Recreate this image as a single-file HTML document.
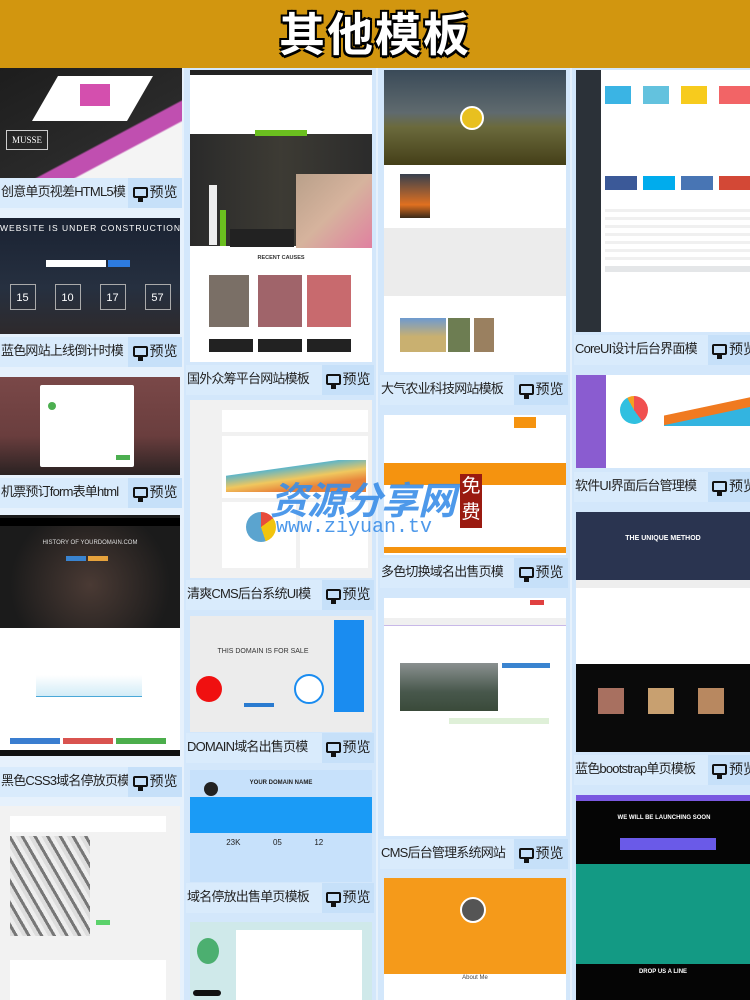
<!DOCTYPE html>
<html><head><meta charset="utf-8"><style>
*{margin:0;padding:0;box-sizing:border-box}
body{width:750px;height:1000px;overflow:hidden;background:#e6f1fc;position:relative;font-family:"Liberation Sans","Noto Sans CJK SC",sans-serif}
.a{position:absolute}
.hd{left:0;top:0;width:750px;height:68px;background:#d2960f;text-align:center}
.hd span{font-size:46px;font-weight:bold;color:#fff;line-height:70px;letter-spacing:2px;text-shadow:2px 2px 0 #000,-2px -2px 0 #000,2px -2px 0 #000,-2px 2px 0 #000,0 3px 0 #000}
.col{background:#d3e7fb}
.lb{background:#d9ebfc;font-size:13px;color:#222;line-height:28px;white-space:nowrap;overflow:hidden;padding-left:1px;letter-spacing:-0.8px}
.bt{background:#c6e0f9;font-size:14px;color:#222;line-height:28px;text-align:center;white-space:nowrap}
.mon{display:inline-block;width:15px;height:11px;border:2.5px solid #111;border-radius:2px;vertical-align:-1px;position:relative;margin-right:2px}
.mon:after{content:"";position:absolute;left:3px;top:9px;width:5px;height:4px;background:#111}
.w{background:#fff}
</style></head><body>
<div class="a hd"><span>其他模板</span></div>

<!-- column 1 -->
<div class="a" style="left:0;top:68px;width:182px;height:110px;background:linear-gradient(152deg,#1d1d1d 0%,#2a2a2a 62%,#c04fb0 63%,#c04fb0 72%,#f4f4f4 73%)"></div>
<div class="a" style="left:45px;top:76px;width:95px;height:45px;background:#fff;transform:skew(-30deg)"></div>
<div class="a" style="left:80px;top:84px;width:30px;height:22px;background:#d44fae"></div>
<div class="a" style="left:6px;top:130px;width:42px;height:20px;border:1px solid #ccc;color:#fff;font-size:9px;text-align:center;line-height:18px;font-family:'Liberation Serif',serif">MUSSE</div>
<div class="a lb" style="left:0;top:178px;width:128px;height:30px">创意单页视差HTML5模</div>
<div class="a bt" style="left:128px;top:178px;width:54px;height:30px"><i class="mon"></i>预览</div>

<div class="a" style="left:0;top:218px;width:180px;height:116px;background:linear-gradient(#1a2232,#263040 60%,#2e2a2c)"></div>
<div class="a" style="left:0;top:223px;width:180px;color:#fff;font-size:8.5px;text-align:center;letter-spacing:1px;white-space:nowrap">WEBSITE IS UNDER CONSTRUCTION</div>
<div class="a w" style="left:46px;top:260px;width:60px;height:7px"></div>
<div class="a" style="left:108px;top:260px;width:22px;height:7px;background:#2d7be0"></div>
<div class="a" style="left:0;top:284px;width:180px;color:#fff;font-size:11px;display:flex;justify-content:space-around">
<span style="border:1px solid #aaa;width:26px;height:26px;text-align:center;line-height:26px">15</span><span style="border:1px solid #aaa;width:26px;height:26px;text-align:center;line-height:26px">10</span><span style="border:1px solid #aaa;width:26px;height:26px;text-align:center;line-height:26px">17</span><span style="border:1px solid #aaa;width:26px;height:26px;text-align:center;line-height:26px">57</span></div>
<div class="a lb" style="left:0;top:337px;width:128px;height:30px">蓝色网站上线倒计时模</div>
<div class="a bt" style="left:128px;top:337px;width:54px;height:30px"><i class="mon"></i>预览</div>

<div class="a" style="left:0;top:377px;width:180px;height:98px;background:linear-gradient(#7a4848,#6a3e3e 60%,#2a2222)"></div>
<div class="a w" style="left:40px;top:385px;width:94px;height:82px;border-radius:2px"></div>
<div class="a" style="left:48px;top:402px;width:8px;height:8px;border-radius:50%;background:#4caf50"></div>
<div class="a" style="left:116px;top:455px;width:14px;height:5px;background:#4caf50"></div>
<div class="a lb" style="left:0;top:478px;width:128px;height:30px">机票预订form表单html</div>
<div class="a bt" style="left:128px;top:478px;width:54px;height:30px"><i class="mon"></i>预览</div>

<div class="a" style="left:0;top:515px;width:180px;height:113px;background:radial-gradient(circle at 90px 70px,#4a3a34,#1b1b1b 70%)"></div>
<div class="a" style="left:0;top:518px;width:180px;height:8px;background:#000"></div>
<div class="a" style="left:0;top:540px;width:180px;color:#ddd;font-size:6px;text-align:center">HISTORY OF YOURDOMAIN.COM</div>
<div class="a" style="left:66px;top:556px;width:20px;height:5px;background:#3a84d0"></div><div class="a" style="left:88px;top:556px;width:20px;height:5px;background:#e6a23c"></div>
<div class="a w" style="left:0;top:628px;width:180px;height:126px"></div>
<div class="a" style="left:36px;top:675px;width:106px;height:22px;background:linear-gradient(#fff,#d2ecf7);border-bottom:1px solid #4aa8d8"></div>
<div class="a" style="left:10px;top:738px;width:50px;height:6px;background:#3a7ed0"></div>
<div class="a" style="left:63px;top:738px;width:50px;height:6px;background:#d9534f"></div>
<div class="a" style="left:116px;top:738px;width:50px;height:6px;background:#4cae4c"></div>
<div class="a" style="left:0;top:750px;width:180px;height:6px;background:#111"></div>
<div class="a lb" style="left:0;top:767px;width:128px;height:30px">黑色CSS3域名停放页模</div>
<div class="a bt" style="left:128px;top:767px;width:54px;height:30px"><i class="mon"></i>预览</div>

<div class="a" style="left:0;top:806px;width:180px;height:194px;background:#f2f2f2"></div>
<div class="a w" style="left:10px;top:816px;width:156px;height:16px"></div>
<div class="a" style="left:10px;top:836px;width:80px;height:100px;background:repeating-linear-gradient(60deg,#ddd 0 4px,#777 4px 7px,#eee 7px 11px)"></div>
<div class="a w" style="left:10px;top:960px;width:156px;height:40px"></div>
<div class="a" style="left:96px;top:920px;width:14px;height:5px;background:#5bd26b"></div>

<!-- column 2 -->
<div class="a col" style="left:184px;top:68px;width:192px;height:932px"></div>
<div class="a w" style="left:190px;top:70px;width:182px;height:292px"></div>
<div class="a" style="left:190px;top:70px;width:182px;height:5px;background:#222"></div>
<div class="a" style="left:190px;top:134px;width:182px;height:112px;background:linear-gradient(90deg,#2a2a2a,#3d3b34 50%,#2b2b2b)"></div>
<div class="a" style="left:190px;top:118px;width:182px;color:#fff;font-size:8.5px;font-weight:bold;text-align:center">GIVE A HELPING HAND</div>
<div class="a" style="left:255px;top:130px;width:52px;height:6px;background:#6bbf1f"></div>
<div class="a" style="left:296px;top:174px;width:76px;height:74px;background:linear-gradient(135deg,#b9a08a,#d6b39d 50%,#e080a0)"></div>
<div class="a" style="left:230px;top:229px;width:64px;height:18px;background:#222"></div>
<div class="a" style="left:209px;top:185px;width:8px;height:60px;background:#eee"></div>
<div class="a" style="left:220px;top:210px;width:6px;height:36px;background:#6bbf1f"></div>
<div class="a" style="left:190px;top:255px;width:182px;text-align:center;font-size:5.5px;font-weight:bold;color:#333">RECENT CAUSES</div>
<div class="a" style="left:209px;top:275px;width:40px;height:52px;background:#7a6f66"></div>
<div class="a" style="left:258px;top:275px;width:44px;height:52px;background:#a0646a"></div>
<div class="a" style="left:307px;top:275px;width:44px;height:52px;background:#c86a6e"></div>
<div class="a" style="left:209px;top:339px;width:44px;height:13px;background:#222"></div>
<div class="a" style="left:258px;top:339px;width:44px;height:13px;background:#222"></div>
<div class="a" style="left:307px;top:339px;width:44px;height:13px;background:#222"></div>
<div class="a lb" style="left:186px;top:365px;width:136px;height:30px">国外众筹平台网站模板</div>
<div class="a bt" style="left:322px;top:365px;width:52px;height:30px"><i class="mon"></i>预览</div>

<div class="a" style="left:190px;top:400px;width:182px;height:178px;background:#f1f1f1"></div>
<div class="a w" style="left:222px;top:410px;width:146px;height:22px"></div>
<div class="a w" style="left:222px;top:436px;width:146px;height:62px"></div>
<div class="a" style="left:226px;top:460px;width:140px;height:32px;background:linear-gradient(172deg,transparent 30%,#5fb5c7 31%,#f0c75e 55%,#e8833a 75%)"></div>
<div class="a w" style="left:222px;top:502px;width:74px;height:66px"></div>
<div class="a" style="left:246px;top:512px;width:30px;height:30px;border-radius:50%;background:conic-gradient(#e74c3c 0 15%,#f1c40f 15% 45%,#5ba4cf 45%)"></div>
<div class="a w" style="left:300px;top:502px;width:68px;height:66px"></div>
<div class="a lb" style="left:186px;top:580px;width:136px;height:30px">清爽CMS后台系统UI模</div>
<div class="a bt" style="left:322px;top:580px;width:52px;height:30px"><i class="mon"></i>预览</div>

<div class="a" style="left:190px;top:616px;width:182px;height:116px;background:#ececec"></div>
<div class="a" style="left:334px;top:620px;width:30px;height:92px;background:#1a8cf0"></div>
<div class="a" style="left:190px;top:648px;width:146px;text-align:center;font-size:7px;color:#333">THIS DOMAIN IS FOR SALE</div>
<div class="a" style="left:196px;top:676px;width:26px;height:26px;border-radius:50%;background:#f01010"></div>
<div class="a" style="left:294px;top:674px;width:30px;height:30px;border-radius:50%;border:2px solid #1a8cf0;background:#fff"></div>
<div class="a" style="left:244px;top:703px;width:30px;height:4px;background:#2a7bd0"></div>
<div class="a lb" style="left:186px;top:733px;width:136px;height:30px">DOMAIN域名出售页模</div>
<div class="a bt" style="left:322px;top:733px;width:52px;height:30px"><i class="mon"></i>预览</div>

<div class="a" style="left:190px;top:770px;width:182px;height:112px;background:#c7e1fb"></div>
<div class="a" style="left:190px;top:780px;width:182px;text-align:center;font-size:6px;color:#222;font-weight:bold">YOUR DOMAIN NAME</div>
<div class="a" style="left:204px;top:782px;width:14px;height:14px;border-radius:50%;background:#222"></div>
<div class="a" style="left:190px;top:797px;width:182px;height:36px;background:#1a9bf6"></div>
<div class="a" style="left:190px;top:838px;width:182px;font-size:8px;color:#222;display:flex;justify-content:space-around;padding-left:20px"><span>23K</span><span>05</span><span>12</span><span></span></div>
<div class="a lb" style="left:186px;top:883px;width:136px;height:30px">域名停放出售单页模板</div>
<div class="a bt" style="left:322px;top:883px;width:52px;height:30px"><i class="mon"></i>预览</div>

<div class="a" style="left:190px;top:922px;width:182px;height:78px;background:#cfe9ea"></div>
<div class="a w" style="left:236px;top:930px;width:126px;height:70px"></div>
<div class="a" style="left:197px;top:938px;width:22px;height:26px;border-radius:50%;background:#4caf70"></div>
<div class="a" style="left:193px;top:990px;width:28px;height:6px;border-radius:3px;background:#111"></div>

<!-- column 3 -->
<div class="a col" style="left:378px;top:68px;width:192px;height:932px"></div>
<div class="a w" style="left:384px;top:70px;width:182px;height:302px"></div>
<div class="a" style="left:384px;top:70px;width:182px;height:95px;background:linear-gradient(#3a4a58,#5f6a6e 45%,#6b6a3c 60%,#443f18)"></div>
<div class="a" style="left:460px;top:106px;width:24px;height:24px;border-radius:50%;background:#e8c020;border:2px solid #fff"></div>
<div class="a" style="left:400px;top:174px;width:30px;height:44px;background:linear-gradient(#37404e,#e07020 70%,#3a2a1a)"></div>
<div class="a" style="left:384px;top:228px;width:182px;height:68px;background:#ececec"></div>
<div class="a" style="left:400px;top:318px;width:46px;height:34px;background:linear-gradient(#6e9ad0,#c9b070 55%)"></div>
<div class="a" style="left:448px;top:318px;width:22px;height:34px;background:#6d7d52"></div>
<div class="a" style="left:474px;top:318px;width:20px;height:34px;background:#9a8060"></div>
<div class="a lb" style="left:380px;top:375px;width:134px;height:30px">大气农业科技网站模板</div>
<div class="a bt" style="left:514px;top:375px;width:54px;height:30px"><i class="mon"></i>预览</div>

<div class="a w" style="left:384px;top:415px;width:182px;height:140px"></div>
<div class="a" style="left:384px;top:463px;width:182px;height:22px;background:#f5930f"></div>
<div class="a" style="left:514px;top:417px;width:22px;height:11px;background:#f5930f"></div>
<div class="a" style="left:384px;top:547px;width:182px;height:6px;background:#f5930f"></div>
<div class="a lb" style="left:380px;top:558px;width:134px;height:30px">多色切换域名出售页模</div>
<div class="a bt" style="left:514px;top:558px;width:54px;height:30px"><i class="mon"></i>预览</div>

<div class="a w" style="left:384px;top:598px;width:182px;height:238px"></div>
<div class="a" style="left:384px;top:618px;width:182px;height:8px;background:#f0f0f0;border-bottom:1px solid #c8b8e8"></div>
<div class="a" style="left:530px;top:600px;width:14px;height:5px;background:#e04040"></div>
<div class="a" style="left:400px;top:663px;width:98px;height:48px;background:linear-gradient(#8a9090,#48584c 60%,#3a4a3a)"></div>
<div class="a" style="left:502px;top:663px;width:48px;height:5px;background:#3a84d0"></div>
<div class="a" style="left:449px;top:718px;width:100px;height:6px;background:#dff0d8"></div>
<div class="a lb" style="left:380px;top:839px;width:134px;height:30px">CMS后台管理系统网站</div>
<div class="a bt" style="left:514px;top:839px;width:54px;height:30px"><i class="mon"></i>预览</div>

<div class="a" style="left:384px;top:878px;width:182px;height:96px;background:#f59a1a"></div>
<div class="a" style="left:460px;top:897px;width:26px;height:26px;border-radius:50%;background:#555;border:2px solid #fff"></div>
<div class="a w" style="left:384px;top:974px;width:182px;height:26px"></div>
<div class="a" style="left:384px;top:975px;width:182px;text-align:center;font-size:6px;color:#444">About Me</div>

<!-- column 4 -->
<div class="a col" style="left:572px;top:68px;width:178px;height:932px"></div>
<div class="a w" style="left:576px;top:70px;width:174px;height:262px"></div>
<div class="a" style="left:576px;top:70px;width:25px;height:262px;background:#2b3138"></div>
<div class="a" style="left:605px;top:86px;width:26px;height:18px;background:#3ab4e4"></div>
<div class="a" style="left:643px;top:86px;width:26px;height:18px;background:#63c2de"></div>
<div class="a" style="left:681px;top:86px;width:26px;height:18px;background:#f7cb1d"></div>
<div class="a" style="left:719px;top:86px;width:31px;height:18px;background:#f26466"></div>
<div class="a" style="left:605px;top:176px;width:32px;height:14px;background:#3b5998"></div>
<div class="a" style="left:643px;top:176px;width:32px;height:14px;background:#00aced"></div>
<div class="a" style="left:681px;top:176px;width:32px;height:14px;background:#4875b4"></div>
<div class="a" style="left:719px;top:176px;width:31px;height:14px;background:#d34836"></div>
<div class="a" style="left:605px;top:204px;width:145px;height:60px;background:repeating-linear-gradient(#fff 0 5px,#f0f0f0 5px 8px)"></div>
<div class="a" style="left:605px;top:266px;width:145px;height:6px;background:#e4e6e8"></div>
<div class="a lb" style="left:574px;top:335px;width:134px;height:30px">CoreUI设计后台界面模</div>
<div class="a bt" style="left:708px;top:335px;width:42px;height:30px;text-align:left;padding-left:4px"><i class="mon"></i>预览</div>

<div class="a w" style="left:576px;top:375px;width:174px;height:93px"></div>
<div class="a" style="left:576px;top:375px;width:30px;height:93px;background:#8a5cd0"></div>
<div class="a" style="left:620px;top:396px;width:28px;height:28px;border-radius:50%;background:conic-gradient(#f05050 0 40%,#30c0e0 40% 92%,#f5a020 92%)"></div>
<div class="a" style="left:664px;top:396px;width:86px;height:30px;background:linear-gradient(168deg,transparent 40%,#f07a20 41%,#f07a20 60%,#33b4e0 61%)"></div>
<div class="a lb" style="left:574px;top:472px;width:134px;height:30px">软件UI界面后台管理模</div>
<div class="a bt" style="left:708px;top:472px;width:42px;height:30px;text-align:left;padding-left:4px"><i class="mon"></i>预览</div>

<div class="a w" style="left:576px;top:512px;width:174px;height:240px"></div>
<div class="a" style="left:576px;top:512px;width:174px;height:68px;background:#2a3450"></div>
<div class="a" style="left:576px;top:535px;width:174px;text-align:center;font-size:7px;color:#fff;font-weight:bold">THE UNIQUE METHOD</div>
<div class="a" style="left:576px;top:580px;width:174px;height:8px;background:#eee"></div>
<div class="a" style="left:576px;top:664px;width:174px;height:88px;background:#0a0a0a"></div>
<div class="a" style="left:598px;top:688px;width:26px;height:26px;background:#a87060"></div>
<div class="a" style="left:648px;top:688px;width:26px;height:26px;background:#c8a070"></div>
<div class="a" style="left:698px;top:688px;width:26px;height:26px;background:#b88860"></div>
<div class="a lb" style="left:574px;top:755px;width:134px;height:30px">蓝色bootstrap单页模板</div>
<div class="a bt" style="left:708px;top:755px;width:42px;height:30px;text-align:left;padding-left:4px"><i class="mon"></i>预览</div>

<div class="a" style="left:576px;top:795px;width:174px;height:205px;background:#050505"></div>
<div class="a" style="left:576px;top:795px;width:174px;height:6px;background:#7a58e0"></div>
<div class="a" style="left:577px;top:815px;width:174px;text-align:center;font-size:6px;color:#fff;font-weight:bold">WE WILL BE LAUNCHING SOON</div>
<div class="a" style="left:620px;top:838px;width:96px;height:12px;background:#6a5ae8"></div>
<div class="a" style="left:576px;top:864px;width:174px;height:100px;background:#139a84"></div>
<div class="a" style="left:576px;top:969px;width:174px;text-align:center;font-size:6px;color:#fff;font-weight:bold">DROP US A LINE</div>

<!-- watermark -->
<div class="a" style="left:270px;top:470px;font-size:38px;font-weight:bold;color:#3b8ee8;font-style:italic;letter-spacing:-1px;opacity:.9;white-space:nowrap">资源分享网</div>
<div class="a" style="left:460px;top:474px;width:22px;height:54px;background:#9a1a10;color:#fff;font-size:19px;line-height:26px;text-align:center">免费</div>
<div class="a" style="left:276px;top:516px;font-size:20px;color:#3b8ee8;font-family:'Liberation Mono',monospace;white-space:nowrap;opacity:.9">www.ziyuan.tv</div>
</body></html>
